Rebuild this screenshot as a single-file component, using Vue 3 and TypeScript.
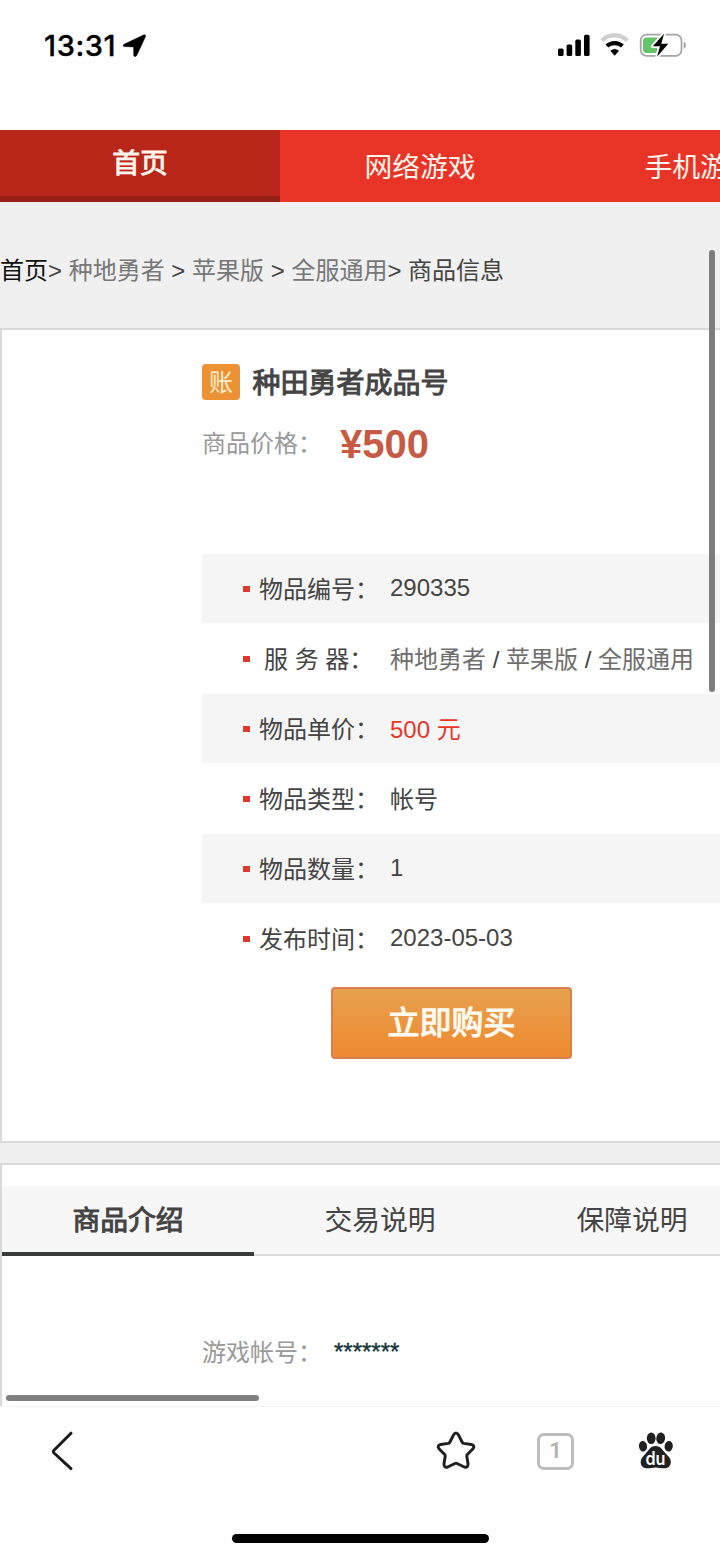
<script setup lang="ts">
interface Crumb {
  text: string
  tone: 'home' | 'link' | 'plain'
}
interface Detail {
  label: string
  value: string
  kind: 'number' | 'server' | 'cost' | 'word'
}

const navItems: string[] = ['首页', '网络游戏', '手机游戏']
const crumbs: Crumb[] = [
  { text: '首页', tone: 'home' },
  { text: '> ', tone: 'plain' },
  { text: '种地勇者', tone: 'link' },
  { text: ' > ', tone: 'plain' },
  { text: '苹果版', tone: 'link' },
  { text: ' > ', tone: 'plain' },
  { text: '全服通用', tone: 'link' },
  { text: '> 商品信息', tone: 'plain' },
]
const details: Detail[] = [
  { label: '物品编号：', value: '290335', kind: 'number' },
  { label: '服 务 器：', value: '', kind: 'server' },
  { label: '物品单价：', value: '500 元', kind: 'cost' },
  { label: '物品类型：', value: '帐号', kind: 'word' },
  { label: '物品数量：', value: '1', kind: 'number' },
  { label: '发布时间：', value: '2023-05-03', kind: 'number' },
]
const tabs: string[] = ['商品介绍', '交易说明', '保障说明']
</script>

<template>
  <div class="screen">
    <header class="status">
      <div class="clock">
        <span class="time">13:31</span>
        <svg class="location" width="24" height="24" viewBox="0 0 24 24">
          <path d="M1 10.300 20.500 1c1.400-.6 2.500.4 1.900 1.800L13.700 21.500c-.8 1.600-2.900 1.200-3-.6L10.600 12.900 1.500 12.600C-.2 12.500-.4 11 1 10.300z" fill="#000" stroke="#000" stroke-width=".5" />
        </svg>
      </div>
      <svg class="indicators" width="132" height="28" viewBox="0 0 132 28">
        <rect x="3" y="15.500" width="5.600" height="7.500" rx="1.600" />
        <rect x="11.600" y="11.500" width="5.600" height="11.500" rx="1.600" />
        <rect x="20.300" y="6.500" width="5.600" height="16.500" rx="1.600" />
        <rect x="29" y="1.800" width="5.600" height="21.200" rx="1.600" />
        <path d="M46.900 7.500a18.500 18.500 0 0 1 25.400 0" fill="none" stroke="#cfcfcf" stroke-width="4.200" />
        <path d="M51.900 13.100a11.500 11.500 0 0 1 15.500 0" fill="none" stroke="#000" stroke-width="4.100" />
        <path d="M55.800 17.800q3.850-3 7.700 0L59.650 22.300z" stroke="#000" stroke-width=".8" stroke-linejoin="round" />
        <rect x="85.700" y="1.700" width="40.800" height="21.100" rx="5.800" fill="none" stroke="#a5a5a5" stroke-width="1.700" />
        <path d="M128.700 8.800c3 1.500 3 5.500 0 7z" fill="#a5a5a5" />
        <path d="M91.500 4.600H102V19.900H91.500q-3.500 0-3.500-3.500V8.100q0-3.500 3.500-3.500z" fill="#65c466" />
        <path d="M109 0.800 97.800 13.300H105L102.100 23.700 113.300 10.800H106.300z" fill="#000" stroke="#fff" stroke-width="3.600" stroke-linejoin="round" paint-order="stroke" />
      </svg>
    </header>

    <main class="page">
      <nav class="nav">
        <a v-for="(item, i) in navItems" :key="item" class="nav-item" :class="{ current: i === 0 }">{{ item }}</a>
      </nav>

      <div class="crumbs"><span v-for="(c, i) in crumbs" :key="i" :class="c.tone">{{ c.text }}</span></div>

      <section class="card product">
        <div class="title-row">
          <span class="badge">账</span>
          <h1 class="title">种田勇者成品号</h1>
        </div>
        <div class="price-row">
          <span class="price-label">商品价格：</span>
          <strong class="price">¥500</strong>
        </div>
        <ul class="details">
          <li v-for="d in details" :key="d.label" class="detail">
            <i class="bullet"></i>
            <span class="label" :class="{ spaced: d.kind === 'server' }">{{ d.label }}</span>
            <span v-if="d.kind === 'server'" class="value"><a class="server">种地勇者</a> / <a class="server">苹果版</a> / <a class="server">全服通用</a></span>
            <span v-else class="value" :class="d.kind">{{ d.value }}</span>
          </li>
        </ul>
        <button class="buy" type="button">立即购买</button>
      </section>

      <section class="card intro">
        <div class="tabs">
          <a v-for="(tab, i) in tabs" :key="tab" class="tab" :class="{ active: i === 0 }">{{ tab }}</a>
        </div>
        <div class="account">
          <span class="account-label">游戏帐号：</span>
          <span class="stars">*******</span>
        </div>
      </section>
      <div class="scroll-y"></div>
      <div class="scroll-x"></div>
    </main>

    <footer class="toolbar">
      <div class="tools">
        <svg class="back" width="28" height="44" viewBox="0 0 28 44">
          <path d="M23 4.200 6 21.200q-1.400 1.400 0 2.800L23 39.600" fill="none" stroke="#1c1c1c" stroke-width="3" stroke-linecap="round" stroke-linejoin="round" />
        </svg>
        <svg class="star" width="42" height="42" viewBox="0 0 44 44">
          <path d="M19.300 5.300Q22 1.200 24.700 5.300L28.500 12.800Q29 13.800 30.100 14L38 15.200Q42.200 16.300 39.800 19.700L33.900 25.700Q33.200 26.500 33.300 27.600L34.600 35.700Q34.600 39.900 30.700 38.800L23.100 35.100Q22 34.600 20.900 35.100L13.300 38.800Q9.400 39.900 9.400 35.700L10.700 27.600Q10.800 26.500 10.100 25.700L4.200 19.700Q1.800 16.300 6 15.200L13.900 14Q15 13.800 15.500 12.800Z" fill="none" stroke="#202020" stroke-width="3.100" stroke-linejoin="round" />
        </svg>
        <span class="pages">1</span>
        <svg class="paw" width="36" height="40" viewBox="0 0 36 40">
          <g fill="#202020">
            <ellipse cx="5" cy="15.300" rx="4.100" ry="5.300" transform="rotate(-8 5 15.300)" />
            <ellipse cx="13.200" cy="7.300" rx="4.400" ry="5.800" />
            <ellipse cx="22.700" cy="7.300" rx="4.400" ry="5.800" transform="rotate(7 22.700 7.300)" />
            <ellipse cx="30.700" cy="15.300" rx="4.100" ry="5.300" transform="rotate(8 30.700 15.300)" />
            <path d="M17.500 15c5.300 0 7.400 4.600 10.400 7.800 3.200 3 5.300 5.500 4.900 9-.4 3.900-3.200 5.700-6.900 5.500-3-.1-5.200-.9-8.300-.9s-5.300.8-8.300.9C5.700 37.400 3 35.500 2.700 31.800c-.3-3.500 1.800-6 4.800-9C10.500 19.600 12.200 15 17.500 15z" />
          </g>
          <text x="7.500" y="34" textLength="20" lengthAdjust="spacingAndGlyphs" class="du">du</text>
        </svg>
      </div>
      <div class="home-bar"></div>
    </footer>
  </div>
</template>

<style>
body {
  margin: 0;
  background: #fff;
}
</style>

<style scoped>
.screen {
  box-sizing: border-box;
  width: 720px;
  height: 1558px;
  overflow: hidden;
  display: flex;
  flex-direction: column;
  background: #fefefe;
  color: #444;
  font-family: "Liberation Sans", "Noto Sans CJK SC", sans-serif;
  font-size: 24px;
}
.status {
  box-sizing: border-box;
  flex: 0 0 130px;
  padding: 33px 33px 0 44px;
  display: flex;
  justify-content: space-between;
  align-items: flex-start;
}
.clock {
  display: flex;
  gap: 7px;
  height: 26px;
}
.time {
  font: 500 29px/25px Inter, sans-serif;
  letter-spacing: 0.6px;
  -webkit-text-stroke: 0.3px #000;
  color: #000;
  width: 72px;
  white-space: nowrap;
}
.location {
  margin-top: 1px;
}
.page {
  position: relative;
  flex: 0 0 1276px;
  overflow: hidden;
  background: #f0f0f0;
}
.nav {
  display: flex;
  width: 840px;
  height: 72px;
  background: #e83427;
}
.nav-item {
  box-sizing: border-box;
  flex: 0 0 280px;
  height: 72px;
  line-height: 76px;
  text-align: center;
  font-size: 27.800px;
  color: #fff5ec;
}
.nav-item.current {
  background: #b9271b;
  border-bottom: 6px solid #952016;
  line-height: 68px;
  -webkit-text-stroke: 0.9px #fff5ec;
}
.crumbs {
  height: 126px;
  line-height: 137px;
  white-space: pre;
}
.home {
  color: #111;
}
.link {
  color: #777;
}
.plain {
  color: #444;
}
.card {
  box-sizing: border-box;
  width: 900px;
  border: 2px solid #dadada;
  background: #fff;
}
.product {
  height: 815px;
  padding: 33px 0 0 200px;
}
.title-row {
  display: flex;
  align-items: center;
  gap: 12.500px;
  height: 38px;
}
.badge {
  width: 38px;
  height: 36px;
  line-height: 37px;
  border-radius: 4px;
  background: #ed9135;
  color: #fff0cf;
  text-align: center;
  font-size: 24px;
}
.title {
  margin: 0;
  padding-top: 3px;
  font-size: 28px;
  line-height: 38px;
  font-weight: 400;
  -webkit-text-stroke: 1px #444;
  color: #444;
}
.price-row {
  display: flex;
  height: 50px;
  margin-top: 17px;
  line-height: 52px;
}
.price-label {
  width: 138px;
  color: #999;
}
.price {
  font-size: 40px;
  color: #c75a45;
}
.details {
  list-style: none;
  margin: 86px 0 0;
  padding: 0;
}
.detail {
  display: flex;
  align-items: center;
  height: 69px;
  margin-bottom: 1px;
  padding-left: 41px;
  line-height: 69px;
}
.detail:nth-child(odd) {
  background: #f5f5f5;
}
.bullet {
  width: 7px;
  height: 6px;
  margin-right: 9px;
  background: #dc382c;
}
.label {
  width: 131px;
  padding-top: 1px;
  white-space: pre;
}
.label.spaced {
  box-sizing: border-box;
  padding-left: 5px;
}
.value {
  padding-top: 1px;
  white-space: nowrap;
}
.number {
  padding: 0 0 2px;
}
.cost {
  color: #e5372c;
}
.server {
  color: #6e6e6e;
}
.buy {
  display: block;
  box-sizing: border-box;
  width: 241px;
  height: 72px;
  margin: 14px 0 0 129px;
  padding: 0;
  border: 2px solid #d9804f;
  border-radius: 4px;
  background: linear-gradient(#e7a04e, #ef8a30);
  color: #fffaf0;
  font: 400 32px/68px "Liberation Sans", "Noto Sans CJK SC", sans-serif;
  -webkit-text-stroke: 1.200px #fffaf0;
}
.intro {
  height: 300px;
  margin-top: 20px;
  padding-top: 21px;
}
.tabs {
  box-sizing: border-box;
  display: flex;
  height: 70px;
  background: #f7f7f7;
  border-bottom: 2px solid #dcdcdc;
}
.tab {
  box-sizing: border-box;
  flex: 0 0 252px;
  height: 70px;
  line-height: 69px;
  text-align: center;
  font-size: 27.800px;
}
.tab.active {
  border-bottom: 4px solid #393b3a;
  -webkit-text-stroke: 1px #444;
}
.account {
  display: flex;
  margin: 77px 0 0 200px;
  line-height: 40px;
}
.account-label {
  width: 132px;
  color: #999;
}
.stars {
  color: #16363c;
  line-height: 37px;
  -webkit-text-stroke: 0.4px #16363c;
}
.scroll-y {
  position: absolute;
  left: 709px;
  top: 120px;
  width: 6px;
  height: 442px;
  border-radius: 3px;
  background: #7d7d7d;
}
.scroll-x {
  position: absolute;
  left: 6px;
  top: 1265px;
  width: 253px;
  height: 6px;
  border-radius: 3px;
  background: #7f7f7f;
}
.toolbar {
  box-sizing: border-box;
  flex: 1;
  border-top: 1px solid #f5f5f5;
  padding-top: 22px;
}
.tools {
  display: flex;
  align-items: center;
  height: 44px;
  padding-left: 48px;
}
.star {
  margin-left: 359px;
}
.pages {
  box-sizing: border-box;
  width: 37px;
  height: 37px;
  margin-left: 60px;
  border: 3px solid #bdbdbd;
  border-radius: 7px;
  color: #b2b2b2;
  text-align: center;
  font: 600 22px/30px Lato, sans-serif;
  font-family: Roboto, sans-serif;
}
.paw {
  margin-left: 64px;
}
.du {
  fill: #fff;
  font: 600 18px Inter, sans-serif;
}
.home-bar {
  width: 257px;
  height: 9px;
  margin: 61px 0 0 232px;
  border-radius: 5px;
  background: #000;
}
</style>
